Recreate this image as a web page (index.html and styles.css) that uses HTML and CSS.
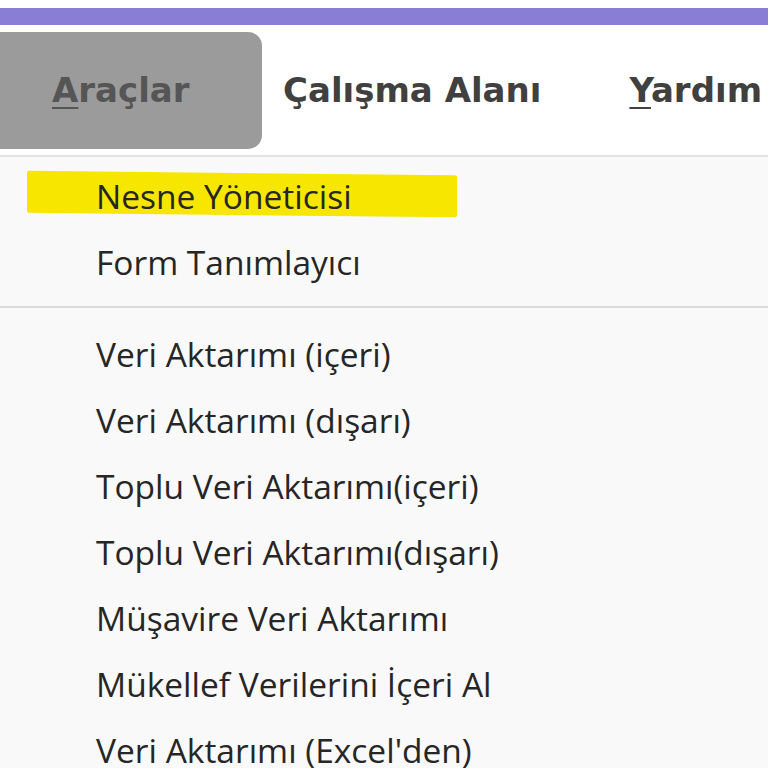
FILE: index.html
```html
<!DOCTYPE html>
<html lang="tr">
<head>
<meta charset="utf-8">
<title>Araçlar menüsü</title>
<link rel="stylesheet" href="styles.css">
</head>
<body>
<div class="topstrip"></div>
<div class="titlebar"></div>
<nav class="menubar">
  <div class="mb-item active"><span class="u">A</span>raçlar</div>
  <div class="mb-item">Çalışma Alanı</div>
  <div class="mb-item yardim"><span class="u">Y</span>ardım</div>
</nav>
<div class="dropdown">
  <div class="item marked"><span class="mark"></span><span class="label">Nesne Yöneticisi</span></div>
  <div class="item"><span class="label">Form Tanımlayıcı</span></div>
  <div class="sep"></div>
  <div class="item"><span class="label">Veri Aktarımı (içeri)</span></div>
  <div class="item"><span class="label">Veri Aktarımı (dışarı)</span></div>
  <div class="item"><span class="label">Toplu Veri Aktarımı(içeri)</span></div>
  <div class="item"><span class="label">Toplu Veri Aktarımı(dışarı)</span></div>
  <div class="item"><span class="label">Müşavire Veri Aktarımı</span></div>
  <div class="item"><span class="label">Mükellef Verilerini İçeri Al</span></div>
  <div class="item"><span class="label">Veri Aktarımı (Excel'den)</span></div>
</div>
</body>
</html>
```
FILE: styles.css
```css
html, body {
  margin: 0;
  padding: 0;
  background: #ffffff;
  overflow: hidden;
  height: 768px;
}
.topstrip {
  height: 8px;
  background: #ffffff;
}
.titlebar {
  height: 17px;
  background: #8a7dd6;
}
.menubar {
  height: 130px;
  display: flex;
  align-items: center;
  background: #ffffff;
  border-bottom: 2px solid #e2e2e2;
  font-family: "DejaVu Sans", Verdana, sans-serif;
  font-weight: bold;
  font-size: 34px;
  color: #404040;
}
.mb-item {
  white-space: nowrap;
  flex-shrink: 0;
}
.mb-item.active {
  width: 262px;
  height: 117px;
  box-sizing: border-box;
  padding-left: 52px;
  display: flex;
  align-items: center;
  background: #9b9b9b;
  border-radius: 0 14px 14px 0;
  color: #555555;
  margin-right: 21px;
}
.yardim {
  margin-left: 88px;
}
.u {
  text-decoration: underline;
  text-decoration-thickness: 2px;
  text-underline-offset: 5px;
}
.dropdown {
  background: #f9f9f9;
  padding-top: 6px;
  font-family: "Open Sans", "Noto Sans", sans-serif;
  font-size: 33.5px;
  color: #262626;
}
.item {
  position: relative;
  height: 66px;
  line-height: 66px;
  padding-left: 96px;
  white-space: nowrap;
}
.label {
  position: relative;
}
.mark {
  position: absolute;
  left: 27px;
  top: 10px;
  width: 430px;
  height: 42px;
  background: #f6e600;
  transform: skewY(0.6deg);
  border-radius: 2px;
}
.sep {
  height: 2px;
  background: #dcdcdc;
  margin: 11px 0 13px 0;
}
```
